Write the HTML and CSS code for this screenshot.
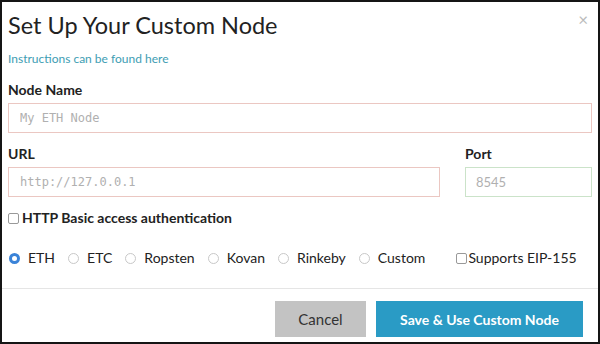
FILE: index.html
```html
<!DOCTYPE html>
<html lang="en">
<head>
    <meta charset="UTF-8">
    <meta name="viewport" content="width=device-width, initial-scale=1.0">
    <title>Set Up Your Custom Node</title>
    <link rel="stylesheet" href="styles.css">
</head>
<body>
    <div class="modal">
        <div class="modal-header">
            <h1>Set Up Your Custom Node</h1>
            <button class="close-button" type="button">&times;</button>
        </div>
        <div class="modal-body">
            <a href="#" class="help-link">Instructions can be found here</a>
            <div class="form-group">
                <label class="field-label" for="nodeName">Node Name</label>
                <input id="nodeName" class="field invalid" type="text" placeholder="My ETH Node">
            </div>
            <div class="form-row">
                <div class="form-group grow">
                    <label class="field-label" for="nodeUrl">URL</label>
                    <input id="nodeUrl" class="field invalid" type="text" placeholder="http://127.0.0.1">
                </div>
                <div class="form-group port">
                    <label class="field-label" for="nodePort">Port</label>
                    <input id="nodePort" class="field valid port-field" type="text" placeholder="8545">
                </div>
            </div>
            <label class="check-label strong">
                <input type="checkbox" class="check"> HTTP Basic access authentication
            </label>
            <div class="network-row">
                <label class="radio-label"><input type="radio" name="network" class="radio" checked> ETH</label>
                <label class="radio-label"><input type="radio" name="network" class="radio"> ETC</label>
                <label class="radio-label"><input type="radio" name="network" class="radio"> Ropsten</label>
                <label class="radio-label"><input type="radio" name="network" class="radio"> Kovan</label>
                <label class="radio-label"><input type="radio" name="network" class="radio"> Rinkeby</label>
                <label class="radio-label"><input type="radio" name="network" class="radio"> Custom</label>
                <label class="check-label eip"><input type="checkbox" class="check"> Supports EIP-155</label>
            </div>
        </div>
        <div class="modal-footer">
            <button class="btn btn-cancel" type="button">Cancel</button>
            <button class="btn btn-save" type="button">Save &amp; Use Custom Node</button>
        </div>
    </div>
</body>
</html>
```
FILE: styles.css
```css
body {
    margin: 0;
    padding: 0;
    background: #fff;
    font-family: Lato, "Open Sans", sans-serif;
    color: #333;
}
.modal {
    width: 600px;
    height: 344px;
    box-sizing: border-box;
    border: 2px solid #151515;
    display: flex;
    flex-direction: column;
}
.modal-header {
    display: flex;
    justify-content: space-between;
    padding: 8px 6px 0 6px;
}
h1 {
    margin: 0;
    font-size: 23.5px;
    font-weight: 400;
    line-height: 30px;
    color: #222;
}
.close-button {
    border: none;
    background: none;
    padding: 0;
    margin: 1px 4px 0 0;
    align-self: flex-start;
    font-family: Lato, sans-serif;
    font-size: 17px;
    line-height: 17px;
    color: #bbb;
    cursor: pointer;
}
.modal-body {
    flex: 1;
    padding: 11px 6px 0 6px;
}
.help-link {
    display: block;
    font-size: 12px;
    line-height: 16px;
    color: #3e9db3;
    text-decoration: none;
    margin-bottom: 14px;
}
.form-group {
    margin-bottom: 12px;
}
.form-row {
    display: flex;
    gap: 25px;
}
.grow {
    flex: 1;
}
.port {
    width: 127px;
}
.field-label {
    display: block;
    font-size: 14px;
    line-height: 18px;
    font-weight: 700;
    color: #222;
    margin-bottom: 4px;
}
.field {
    display: block;
    width: 100%;
    height: 30px;
    box-sizing: border-box;
    padding: 0 11px;
    font-family: "DejaVu Sans Mono", monospace;
    font-size: 12px;
    border: 1px solid #ddd;
    border-radius: 0;
    outline: none;
    background: #fff;
}
.field::placeholder {
    color: #b0b0b0;
}
.invalid {
    border-color: #ebc7c2;
}
.valid {
    border-color: #cbe3c9;
}
.port-field {
    font-family: Lato, sans-serif;
    font-size: 13px;
    padding-left: 10px;
}
.check-label {
    display: flex;
    align-items: center;
    font-size: 14px;
    line-height: 18px;
    color: #222;
}
.strong {
    font-weight: 700;
}
.check {
    appearance: none;
    width: 11px;
    height: 11px;
    margin: 0 3px 0 0;
    border: 1px solid #999;
    border-radius: 2px;
    background: #fff;
}
.network-row {
    display: flex;
    align-items: center;
    margin-top: 22px;
}
.radio-label {
    display: flex;
    align-items: center;
    font-size: 14px;
    line-height: 18px;
    color: #222;
    margin-right: 12px;
}
.radio {
    appearance: none;
    width: 11px;
    height: 11px;
    margin: 0 8px 0 1px;
    border: 1px solid #c8c8c8;
    border-radius: 50%;
    background: #fff;
    box-sizing: border-box;
}
.radio:checked {
    border: 3px solid #3a83d8;
    background: #fff;
}
.eip {
    margin-left: 19px;
}
.eip .check {
    margin-right: 1px;
}
.modal-footer {
    display: flex;
    justify-content: flex-end;
    gap: 10px;
    border-top: 1px solid #e5e5e5;
    padding: 12px 15px 5px 0;
}
.btn {
    height: 36px;
    border: none;
    border-radius: 0;
    font-family: Lato, sans-serif;
    font-size: 15px;
    cursor: pointer;
}
.btn-cancel {
    width: 91px;
    background: #c3c3c3;
    color: #333;
}
.btn-save {
    width: 207px;
    background: #2a9bc5;
    color: #fff;
    font-weight: 700;
    font-size: 14px;
}
```
